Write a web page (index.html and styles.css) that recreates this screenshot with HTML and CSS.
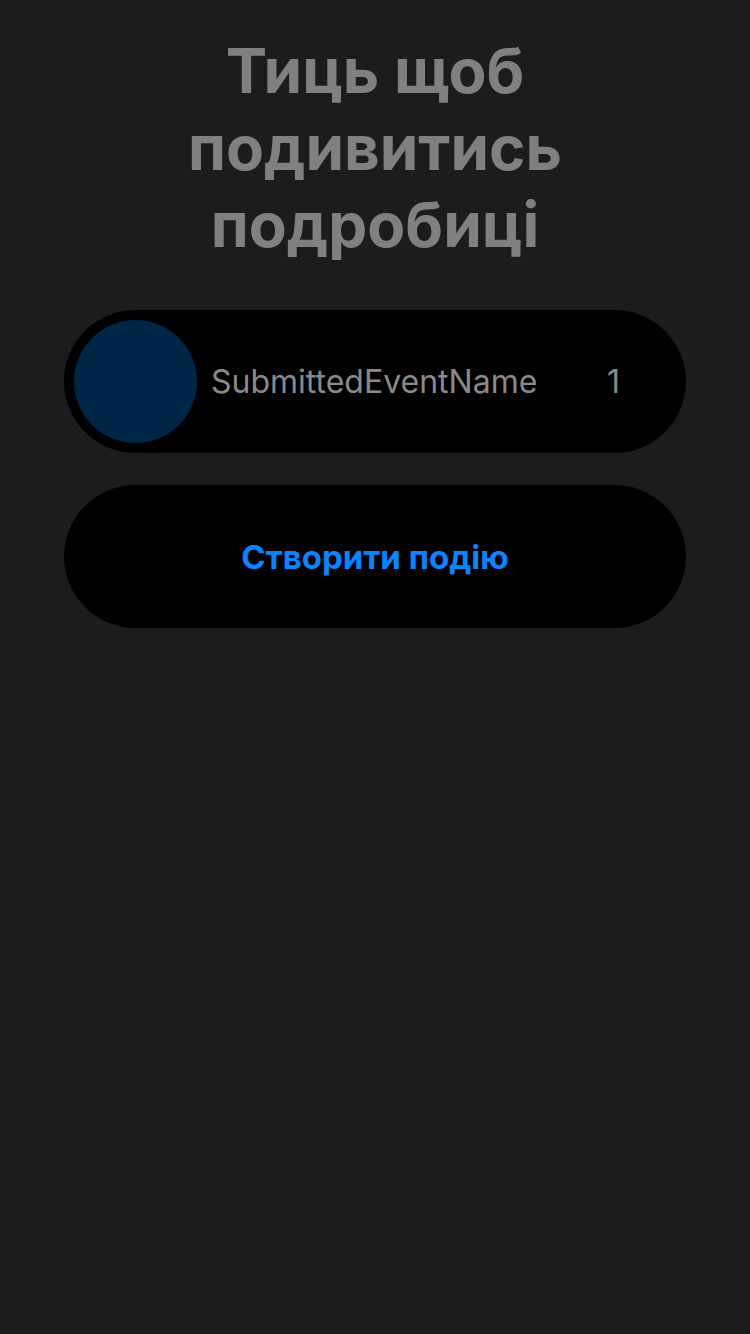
FILE: index.html
```html
<!DOCTYPE html>
<html lang="uk">
<head>
<meta charset="utf-8">
<link rel="stylesheet" href="styles.css">
</head>
<body>
<main class="screen">
  <h1 class="title">Тиць щоб<br>подивитись<br>подробиці</h1>
  <div class="event-row">
    <div class="avatar"></div>
    <span class="event-name">SubmittedEventName</span>
    <span class="event-count">1</span>
  </div>
  <button class="create-btn">Створити подію</button>
</main>
</body>
</html>
```

FILE: styles.css
```css
html, body {
  margin: 0;
  padding: 0;
  background: #1c1c1e;
}
.screen {
  width: 750px;
  min-height: 1334px;
  display: flex;
  flex-direction: column;
  align-items: center;
  padding-top: 32px;
  box-sizing: border-box;
  font-family: Inter, "Noto Sans", sans-serif;
}
.title {
  margin: 0;
  text-align: center;
  font-size: 62px;
  line-height: 77px;
  font-weight: 700;
  color: #808080;
}
.event-row {
  margin-top: 47px;
  width: 622px;
  height: 143px;
  border-radius: 72px;
  background: #000;
  display: flex;
  align-items: center;
  padding: 10px 66px 10px 10px;
  box-sizing: border-box;
}
.avatar {
  width: 123px;
  height: 123px;
  border-radius: 50%;
  background: #002647;
  flex-shrink: 0;
}
.event-name {
  margin-left: 14px;
  flex: 1;
  font-size: 32px;
  color: #8a8a8a;
}
.event-count {
  font-size: 32px;
  color: #8a8a8a;
}
.create-btn {
  margin-top: 32px;
  width: 622px;
  height: 143px;
  border-radius: 72px;
  border: none;
  background: #000;
  color: #0a84ff;
  font-family: Inter, "Noto Sans", sans-serif;
  font-size: 33px;
  font-weight: 700;
  padding: 0;
}
```
